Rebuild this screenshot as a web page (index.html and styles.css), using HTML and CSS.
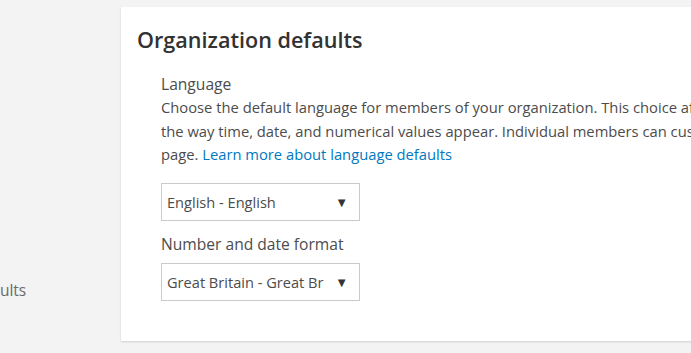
FILE: index.html
```html
<!DOCTYPE html>
<html lang="en">
  <head>
    <meta charset="UTF-8" />
    <title>Organization defaults</title>
    <link rel="stylesheet" href="styles.css">
  </head>
  <body>
    <div class="page">
      <nav class="side">
        <span class="side-item">Language defaults</span>
      </nav>
      <section class="card">
        <h2>Organization defaults</h2>
        <div class="group">
          <label class="label">Language</label>
          <p class="desc">
            Choose the default language for members of your organization. This choice affects the user interface as well as<br />
            the way time, date, and numerical values appear. Individual members can customize this choice on their settings<br />
            page. <a href="#">Learn more about language defaults</a>
          </p>
          <div class="select">
            <span>English - English</span>
            <span class="caret">&#9660;</span>
          </div>
          <label class="label">Number and date format</label>
          <div class="select">
            <span>Great Britain - Great Br</span>
            <span class="caret">&#9660;</span>
          </div>
        </div>
      </section>
    </div>
  </body>
</html>
```

FILE: styles.css
```css
* {
  margin: 0;
  padding: 0;
  box-sizing: border-box;
}
body {
  background-color: #f3f3f3;
  color: #4c4c4c;
  font: 14.75px "Open Sans", sans-serif;
  overflow: hidden;
}

.page {
  display: flex;
  align-items: flex-start;
  padding-top: 7px;
  height: 353px;
}

.side {
  width: 121px;
  flex: none;
  padding-top: 272px;
  overflow: hidden;
}

.side-item {
  display: block;
  margin-left: -106px;
  white-space: nowrap;
  color: #6a6a6a;
  font-size: 15.5px;
}

.card {
  flex: none;
  width: 620px;
  height: 334px;
  background-color: #fff;
  box-shadow: 0 1px 2px rgba(0, 0, 0, 0.15);
  padding: 18px 16px;
}

.card h2 {
  font-size: 21.6px;
  font-weight: 600;
  color: #323232;
  line-height: 30px;
}

.group {
  padding: 18px 0 0 24px;
}

.label {
  display: block;
  font-size: 15.6px;
  line-height: 23px;
  color: #4c4c4c;
}

.desc {
  line-height: 23.5px;
  white-space: nowrap;
  overflow: hidden;
  width: 530px;
}

.desc a {
  color: #0079c1;
  text-decoration: none;
}

.select {
  display: flex;
  justify-content: space-between;
  align-items: center;
  width: 199px;
  height: 38px;
  border: 1px solid #cacaca;
  padding: 0 11px 0 5px;
  margin: 16px 0 12px;
  font-size: 14.6px;
  color: #4c4c4c;
}

.caret {
  font-size: 13px;
  color: #333;
}

.label + .select {
  margin-top: 7px;
}
```
